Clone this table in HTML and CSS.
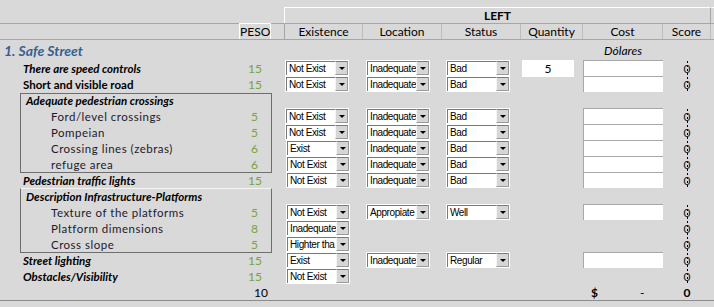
FILE: index.html
```html
<!DOCTYPE html>
<html>
<head>
<meta charset="utf-8">
<title>Safe Street</title>
<link rel="stylesheet" href="styles.css">
</head>
<body>
<div class="sheet">
  <div class="row row-spacer"></div>

  <div class="row row-band">
    <div class="band-left">LEFT</div>
    <div class="band-tail"></div>
  </div>

  <div class="row row-heads">
    <div class="c-peso head peso-head">PESO</div>
    <div class="c-ex head">Existence</div>
    <div class="c-loc head">Location</div>
    <div class="c-st head">Status</div>
    <div class="c-qty head">Quantity</div>
    <div class="c-cost head">Cost</div>
    <div class="c-score head">Score</div>
  </div>

  <div class="row row-title">
    <div class="c-label title">1. Safe Street</div>
    <div class="c-cost unit">Dólares</div>
  </div>

  <div class="row">
    <div class="c-label lbl-main">There are speed controls</div>
    <div class="c-peso num">15</div>
    <div class="c-ex"><div class="combo"><span class="combo-text">Not Exist</span><span class="combo-btn"></span></div></div>
    <div class="c-loc"><div class="combo"><span class="combo-text">Inadequate</span><span class="combo-btn"></span></div></div>
    <div class="c-st"><div class="combo"><span class="combo-text">Bad</span><span class="combo-btn"></span></div></div>
    <div class="c-qty"><div class="qty">5</div></div>
    <div class="c-cost"><div class="cost-box"></div></div>
    <div class="c-score score">0</div>
  </div>

  <div class="row">
    <div class="c-label lbl-main upright">Short and visible road</div>
    <div class="c-peso num">15</div>
    <div class="c-ex"><div class="combo"><span class="combo-text">Not Exist</span><span class="combo-btn"></span></div></div>
    <div class="c-loc"><div class="combo"><span class="combo-text">Inadequate</span><span class="combo-btn"></span></div></div>
    <div class="c-st"><div class="combo"><span class="combo-text">Bad</span><span class="combo-btn"></span></div></div>
    <div class="c-cost"><div class="cost-box"></div></div>
    <div class="c-score score">0</div>
  </div>

  <div class="group">
    <div class="row">
      <div class="c-label lbl-group">Adequate pedestrian crossings</div>
    </div>
    <div class="row">
      <div class="c-label lbl-sub">Ford/level crossings</div>
      <div class="c-peso num sub">5</div>
      <div class="c-ex"><div class="combo"><span class="combo-text">Not Exist</span><span class="combo-btn"></span></div></div>
      <div class="c-loc"><div class="combo"><span class="combo-text">Inadequate</span><span class="combo-btn"></span></div></div>
      <div class="c-st"><div class="combo"><span class="combo-text">Bad</span><span class="combo-btn"></span></div></div>
      <div class="c-cost"><div class="cost-box"></div></div>
      <div class="c-score score">0</div>
    </div>
    <div class="row">
      <div class="c-label lbl-sub">Pompeian</div>
      <div class="c-peso num sub">5</div>
      <div class="c-ex"><div class="combo"><span class="combo-text">Not Exist</span><span class="combo-btn"></span></div></div>
      <div class="c-loc"><div class="combo"><span class="combo-text">Inadequate</span><span class="combo-btn"></span></div></div>
      <div class="c-st"><div class="combo"><span class="combo-text">Bad</span><span class="combo-btn"></span></div></div>
      <div class="c-cost"><div class="cost-box"></div></div>
      <div class="c-score score">0</div>
    </div>
    <div class="row">
      <div class="c-label lbl-sub">Crossing lines (zebras)</div>
      <div class="c-peso num sub">6</div>
      <div class="c-ex"><div class="combo shift"><span class="combo-text">Exist</span><span class="combo-btn"></span></div></div>
      <div class="c-loc"><div class="combo"><span class="combo-text">Inadequate</span><span class="combo-btn"></span></div></div>
      <div class="c-st"><div class="combo"><span class="combo-text">Bad</span><span class="combo-btn"></span></div></div>
      <div class="c-cost"><div class="cost-box"></div></div>
      <div class="c-score score">0</div>
    </div>
    <div class="row">
      <div class="c-label lbl-sub">refuge area</div>
      <div class="c-peso num sub">6</div>
      <div class="c-ex"><div class="combo shift"><span class="combo-text">Not Exist</span><span class="combo-btn"></span></div></div>
      <div class="c-loc"><div class="combo"><span class="combo-text">Inadequate</span><span class="combo-btn"></span></div></div>
      <div class="c-st"><div class="combo"><span class="combo-text">Bad</span><span class="combo-btn"></span></div></div>
      <div class="c-cost"><div class="cost-box"></div></div>
      <div class="c-score score">0</div>
    </div>
  </div>

  <div class="row">
    <div class="c-label lbl-main">Pedestrian traffic lights</div>
    <div class="c-peso num">15</div>
    <div class="c-ex"><div class="combo shift"><span class="combo-text">Not Exist</span><span class="combo-btn"></span></div></div>
    <div class="c-loc"><div class="combo"><span class="combo-text">Inadequate</span><span class="combo-btn"></span></div></div>
    <div class="c-st"><div class="combo"><span class="combo-text">Bad</span><span class="combo-btn"></span></div></div>
    <div class="c-cost"><div class="cost-box"></div></div>
    <div class="c-score score">0</div>
  </div>

  <div class="group group-etched">
    <div class="row">
      <div class="c-label lbl-group">Description Infrastructure-Platforms</div>
    </div>
    <div class="row">
      <div class="c-label lbl-sub">Texture of the platforms</div>
      <div class="c-peso num sub">5</div>
      <div class="c-ex"><div class="combo shift"><span class="combo-text">Not Exist</span><span class="combo-btn"></span></div></div>
      <div class="c-loc"><div class="combo"><span class="combo-text">Appropiate</span><span class="combo-btn"></span></div></div>
      <div class="c-st"><div class="combo"><span class="combo-text">Well</span><span class="combo-btn"></span></div></div>
      <div class="c-cost"><div class="cost-box"></div></div>
      <div class="c-score score">0</div>
    </div>
    <div class="row">
      <div class="c-label lbl-sub">Platform dimensions</div>
      <div class="c-peso num sub">8</div>
      <div class="c-ex"><div class="combo shift"><span class="combo-text">Inadequate</span><span class="combo-btn"></span></div></div>
      <div class="c-score score">0</div>
    </div>
    <div class="row">
      <div class="c-label lbl-sub">Cross slope</div>
      <div class="c-peso num sub">5</div>
      <div class="c-ex"><div class="combo shift"><span class="combo-text">Highter tha</span><span class="combo-btn"></span></div></div>
      <div class="c-score score">0</div>
    </div>
  </div>

  <div class="row">
    <div class="c-label lbl-main">Street lighting</div>
    <div class="c-peso num">15</div>
    <div class="c-ex"><div class="combo shift"><span class="combo-text">Exist</span><span class="combo-btn"></span></div></div>
    <div class="c-loc"><div class="combo"><span class="combo-text">Inadequate</span><span class="combo-btn"></span></div></div>
    <div class="c-st"><div class="combo"><span class="combo-text">Regular</span><span class="combo-btn"></span></div></div>
    <div class="c-cost"><div class="cost-box"></div></div>
    <div class="c-score score">0</div>
  </div>

  <div class="row">
    <div class="c-label lbl-main">Obstacles/Visibility</div>
    <div class="c-peso num">15</div>
    <div class="c-ex"><div class="combo shift"><span class="combo-text">Not Exist</span><span class="combo-btn"></span></div></div>
    <div class="c-score score">0</div>
  </div>

  <div class="row row-total">
    <div class="c-peso total-peso">10</div>
    <div class="c-cost total-cost"><span>$</span><span>-</span></div>
    <div class="c-score total-score">0</div>
  </div>
</div>
</body>
</html>
```

FILE: styles.css
```css
html, body {
  margin: 0;
  padding: 0;
  background: #d9d9d9;
}

.sheet {
  width: 714px;
  height: 307px;
  overflow: hidden;
  font-family: Lato, "Open Sans", sans-serif;
  color: #000;
}

/* every sheet row shares the same column grid */
.row {
  display: grid;
  grid-template-columns: 239px 32px 13px 79px 79px 79px 62px 80px 48px 3px;
  height: 16px;
  box-sizing: border-box;
}

.c-label { grid-column: 1; }
.c-peso  { grid-column: 2; }
.c-ex    { grid-column: 4; }
.c-loc   { grid-column: 5; }
.c-st    { grid-column: 6; }
.c-qty   { grid-column: 7; }
.c-cost  { grid-column: 8; }
.c-score { grid-column: 9; }

/* header band */
.row-spacer { height: 7px; }

.row-band .band-left {
  grid-column: 4 / 10;
  border-top: 1px solid #fff;
  border-left: 1px solid #fff;
  border-right: 1px solid #a6a6a6;
  text-align: center;
  font-weight: 700;
  font-size: 12px;
  line-height: 15px;
}
.row-band .band-tail {
  grid-column: 10;
  border-top: 1px solid #fff;
}

.row-heads {
  border-top: 1px solid #a6a6a6;
}
.head {
  font-size: 12px;
  line-height: 15px;
  text-align: center;
  border-right: 1px solid #bdbdbd;
}
.c-ex.head { border-left: 1px solid #a6a6a6; }
.peso-head {
  border: 1px solid #fff;
  border-bottom: 0;
  margin-top: -1px;
  line-height: 15px;
  text-align: right;
  padding-right: 2px;
}

.row-title {
  height: 22px;
  border-top: 1px solid #a6a6a6;
}
.title {
  font-weight: 700;
  font-style: italic;
  font-size: 14px;
  line-height: 22px;
  color: #366092;
  padding-left: 4px;
}
.unit {
  font-style: italic;
  font-size: 12px;
  line-height: 22px;
  text-align: center;
}

/* labels */
.lbl-main, .lbl-group, .lbl-sub {
  white-space: nowrap;
  line-height: 16px;
}
.lbl-main {
  padding-left: 23px;
  font-weight: 700;
  font-style: italic;
  font-size: 11.5px;
}
.lbl-main.upright { font-style: normal; }
.lbl-group {
  padding-left: 26px;
  font-weight: 700;
  font-style: italic;
  font-size: 11.5px;
}
.lbl-sub {
  padding-left: 51px;
  font-size: 11.5px;
  letter-spacing: 0.5px;
  color: #1c1a2c;
}

.num {
  text-align: right;
  padding-right: 9px;
  font-size: 12px;
  line-height: 16px;
  color: #77a33c;
}
.num.sub { padding-right: 13px; }

/* group boxes framing the nested criteria */
.group {
  position: relative;
}
.group::before {
  content: "";
  position: absolute;
  left: 20px;
  top: 0;
  bottom: 0;
  width: 252px;
  box-sizing: border-box;
  border: 1px solid #6e6e6e;
  pointer-events: none;
}
.group-etched::before {
  border-top-color: #f4f4f4;
  top: -1px;
}

/* drop-down form controls */
.combo {
  box-sizing: border-box;
  width: 64px;
  height: 16px;
  margin-top: -1px;
  display: flex;
  background: #fff;
  border: 1px solid #fff;
}
.c-ex .combo { margin-left: 1px; }
.c-ex .combo.shift { margin-left: 2px; }
.c-loc .combo { margin-left: 3px; }
.c-st .combo { margin-left: 4px; }

.combo-text {
  flex: 1;
  min-width: 0;
  overflow: hidden;
  white-space: nowrap;
  border-top: 1px solid #7a7a7a;
  border-left: 1px solid #7a7a7a;
  padding-left: 2px;
  font-family: "Liberation Sans", Arial, sans-serif;
  font-size: 10px;
  letter-spacing: -0.4px;
  line-height: 13px;
  color: #000;
}
.combo-btn {
  width: 13px;
  flex: none;
  box-sizing: border-box;
  border-top: 1px solid #7a7a7a;
  background: #d6d6d6;
  border-left: 1px solid #f4f4f4;
  border-right: 1px solid #9a9a9a;
  border-bottom: 1px solid #9a9a9a;
  display: flex;
  align-items: center;
  justify-content: center;
}
.combo-btn::after {
  content: "";
  border-left: 3px solid transparent;
  border-right: 3px solid transparent;
  border-top: 3px solid #000;
}

.qty {
  box-sizing: border-box;
  width: 52px;
  height: 17px;
  margin: -1px 0 0 1px;
  background: #fff;
  text-align: center;
  font-size: 12px;
  line-height: 17px;
}

.cost-box {
  box-sizing: border-box;
  width: 80px;
  height: 16px;
  margin-top: -1px;
  background: #fff;
  border-top: 1px solid #a8a8a8;
  border-left: 1px solid #a8a8a8;
}

/* score column: zero over a dashed hairline */
.score {
  text-align: center;
  font-size: 12px;
  line-height: 16px;
  color: #15202e;
  background-image: repeating-linear-gradient(to bottom, #000 0 2px, transparent 2px 4px);
  background-size: 1px 100%;
  background-repeat: no-repeat;
  background-position: 24px 0;
}

/* totals */
.row-total {
  height: 16px;
  border-bottom: 1px solid #8c8c8c;
}
.total-peso {
  text-align: right;
  padding-right: 3px;
  font-size: 12px;
  line-height: 16px;
}
.total-cost {
  display: flex;
  font-weight: 700;
  font-size: 12px;
  line-height: 16px;
}
.total-cost span:first-child { margin-left: 8px; }
.total-cost span:last-child { margin-left: 42px; font-weight: 400; }
.total-score {
  text-align: center;
  font-weight: 700;
  font-size: 12px;
  line-height: 16px;
}
```
